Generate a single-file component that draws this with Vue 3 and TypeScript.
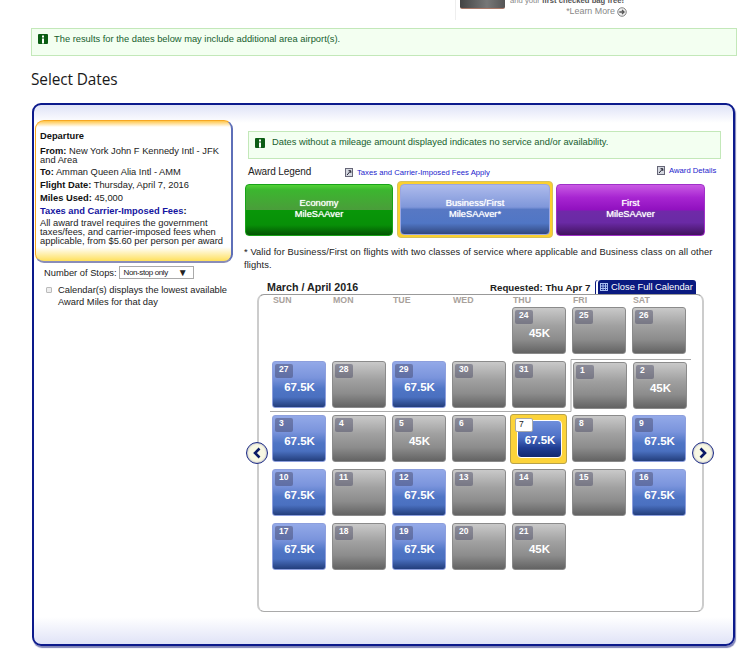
<script setup lang="ts">
type Cell = { day?: number; miles?: string; kind?: 'blue' | 'gray'; sel?: boolean; apr?: boolean }
const weekdays = ['SUN', 'MON', 'TUE', 'WED', 'THU', 'FRI', 'SAT']
const b = (day: number, apr = false): Cell => ({ day, miles: '67.5K', kind: 'blue', apr })
const g = (day: number, miles = '', apr = false): Cell => ({ day, miles, kind: 'gray', apr })
const cells: Cell[] = [
  {}, {}, {}, {}, g(24, '45K'), g(25), g(26),
  b(27), g(28), b(29), g(30), g(31), g(1, '', true), g(2, '45K', true),
  b(3), g(4), g(5, '45K'), g(6), { ...b(7), sel: true }, g(8), b(9),
  b(10), g(11), b(12), g(13), g(14), g(15), b(16),
  b(17), g(18), b(19), g(20), g(21, '45K')
]
const awards = [
  { cls: 'green', a: 'Economy', b: 'MileSAAver' },
  { cls: 'steel', a: 'Business/First', b: 'MileSAAver*' },
  { cls: 'purple', a: 'First', b: 'MileSAAver' }
]
</script>

<template>
  <div class="page">
    <div class="ad">
      <div class="ad-inner">
        <div class="card"></div>
        <div class="ad-text">
          <div class="ad-line">and your <b>first checked bag free!</b></div>
          <div class="learn">*Learn More
            <svg width="10" height="10" viewBox="0 0 11 11"><circle cx="5.5" cy="5.5" r="4.7" fill="#eee" stroke="#777" /><path d="M2.5 5.5h5M5.5 3.2l2.3 2.3-2.3 2.3" fill="none" stroke="#555" stroke-width="1.4" /></svg>
          </div>
        </div>
      </div>
    </div>

    <div class="notice top-notice">
      <svg class="info" width="10" height="10" viewBox="0 0 10 10"><rect width="10" height="10" rx="1" fill="#0b5d14" /><rect x="4" y="1.5" width="2" height="2" fill="#fff" /><rect x="4" y="4.5" width="2" height="5" fill="#fff" /></svg>
      <span>The results for the dates below may include additional area airport(s).</span>
    </div>

    <h1 class="title">Select Dates</h1>

    <div class="panel">
      <aside class="side">
        <div class="summary">
          <div class="s-head">Departure</div>
          <div class="s-line tight"><b>From:</b> New York John F Kennedy Intl - JFK and Area</div>
          <div class="s-line"><b>To:</b> Amman Queen Alia Intl - AMM</div>
          <div class="s-line"><b>Flight Date:</b> Thursday, April 7, 2016</div>
          <div class="s-line"><b>Miles Used:</b> 45,000</div>
          <div class="s-line"><b class="fees">Taxes and Carrier-Imposed Fees</b><b>:</b></div>
          <div class="s-small">All award travel requires the government taxes/fees, and carrier-imposed fees when applicable, from $5.60 per person per award</div>
        </div>
        <div class="stops">
          <span>Number of Stops:</span>
          <div class="select"><span>Non-stop only</span><i>▼</i></div>
        </div>
        <div class="bullet">
          <span class="dot"></span>
          <p>Calendar(s) displays the lowest available Award Miles for that day</p>
        </div>
      </aside>

      <section class="main">
        <div class="notice inner-notice">
          <svg class="info" width="10" height="10" viewBox="0 0 10 10"><rect width="10" height="10" rx="1" fill="#0b5d14" /><rect x="4" y="1.5" width="2" height="2" fill="#fff" /><rect x="4" y="4.5" width="2" height="5" fill="#fff" /></svg>
          <span>Dates without a mileage amount displayed indicates no service and/or availability.</span>
        </div>

        <div class="legend-row">
          <span class="legend">Award Legend</span>
          <a class="ext first-link">
            <svg width="8" height="9" viewBox="0 0 8 9"><rect x=".5" y=".5" width="7" height="8" fill="#d5d8e0" stroke="#667" /><path d="M2 7l3.5-4M3.5 2.7h2.3V5" fill="none" stroke="#223" /></svg>
            Taxes and Carrier-Imposed Fees Apply
          </a>
          <a class="ext second-link">
            <svg width="8" height="9" viewBox="0 0 8 9"><rect x=".5" y=".5" width="7" height="8" fill="#d5d8e0" stroke="#667" /><path d="M2 7l3.5-4M3.5 2.7h2.3V5" fill="none" stroke="#223" /></svg>
            Award Details
          </a>
        </div>

        <div class="awards">
          <div v-for="a in awards" :key="a.cls" class="award-wrap" :class="a.cls">
            <div class="award">
              <div>{{ a.a }}</div>
              <div>{{ a.b }}</div>
            </div>
          </div>
        </div>

        <p class="valid">* Valid for Business/First on flights with two classes of service where applicable and Business class on all other flights.</p>

        <div class="cal-head">
          <span class="month">March / April 2016</span>
          <span class="req">Requested: Thu Apr 7</span>
          <span class="close">
            <svg width="8" height="8" viewBox="0 0 8 8"><path d="M0 .5h8M0 3h8M0 5.5h8M0 7.5h8M.5 0v8M3 0v8M5.5 0v8M7.5 0v8" stroke="#a9bdf0" stroke-width="1" /></svg>
            Close Full Calendar
          </span>
        </div>

        <div class="calendar">
          <button class="nav prev" aria-label="Previous">
            <svg width="10" height="12" viewBox="0 0 10 12"><path d="M7.5 1.5 3 6l4.5 4.5" fill="none" stroke="#0b1a66" stroke-width="2.6" /></svg>
          </button>
          <button class="nav next" aria-label="Next">
            <svg width="10" height="12" viewBox="0 0 10 12"><path d="M2.5 1.5 7 6l-4.5 4.5" fill="none" stroke="#0b1a66" stroke-width="2.6" /></svg>
          </button>
          <div class="weekdays">
            <span v-for="w in weekdays" :key="w">{{ w }}</span>
          </div>
          <div class="grid">
            <svg class="divider" width="424" height="56" viewBox="0 0 424 56"><path d="M0 53.5h301V1.5h120" fill="none" stroke="#aaa" /></svg>
            <template v-for="(c, i) in cells" :key="i">
              <div v-if="c.day === undefined" class="empty"></div>
              <div v-else-if="c.sel" class="sel-wrap">
                <div class="cell blue sel">
                  <span class="day">{{ c.day }}</span>
                  <span class="miles">{{ c.miles }}</span>
                </div>
              </div>
              <div v-else class="cell" :class="[c.kind, { apr: c.apr }]">
                <span class="day">{{ c.day }}</span>
                <span class="miles">{{ c.miles }}</span>
              </div>
            </template>
          </div>
        </div>
      </section>
    </div>
  </div>
</template>

<style>
html, body { margin: 0; background: #fff; }
</style>

<style scoped>
.page {
  width: 750px;
  height: 650px;
  overflow: hidden;
  font-family: "Liberation Sans", Arial, sans-serif;
  color: #222;
  box-sizing: border-box;
}
.ad { height: 20px; overflow: hidden; display: flex; justify-content: flex-start; padding-left: 455px; align-items: flex-end; }
.ad-inner { display: flex; gap: 5px; border-left: 1px solid #eee; padding-left: 4px; height: 20px; }
.card { width: 45px; height: 8px; background: linear-gradient(90deg, #444, #777 60%, #555); border-radius: 0 0 2px 2px; border-bottom: 1px solid #a76; }
.ad-text { width: 117px; color: #888; margin-top: -4px; white-space: nowrap; }
.ad-line { font-size: 7.7px; line-height: 10px; }
.ad-text b { color: #555; }
.learn { font-size: 8.9px; line-height: 11px; display: flex; justify-content: flex-end; align-items: center; gap: 2px; }

.notice {
  box-sizing: border-box;
  background: #f3fff1;
  border: 1px solid #c3e8b9;
  display: flex;
  align-items: flex-start;
  color: #175e2e;
  font-size: 9.33px;
  line-height: 11px;
}
.top-notice { margin: 8px 0 0 31px; width: 706px; height: 28px; padding: 5px 6px 0; gap: 6px; }
.inner-notice { width: 473px; height: 28px; margin-left: 5px; padding: 5px 6px 0; gap: 7px; }
.inner-notice .info { margin-top: 1px; }
.info { flex: none; }

.title {
  margin: 13px 0 0 31px;
  font-family: "Open Sans", sans-serif;
  font-weight: 400;
  font-size: 15.4px;
  line-height: 22px;
  color: #1a1a1a;
  letter-spacing: -.1px;
}

.panel {
  box-sizing: border-box;
  margin: 12px 0 0 32px;
  width: 703px;
  height: 543px;
  border: 2px solid #0c1a8c;
  border-radius: 9px;
  box-shadow: 1px 2px 1px #7f83b8;
  background: linear-gradient(#dfe3f7, #fff 18px, #fff 512px, #e0e3f7 539px);
  display: flex;
  align-items: flex-start;
}

.side { width: 209px; flex: none; padding: 15px 0 0 1px; box-sizing: border-box; }
.summary {
  box-sizing: border-box;
  width: 198px;
  height: 143px;
  border-radius: 9px;
  border: 1px solid #f6a723;
  border-right: 2px solid #5e6fb8;
  border-bottom: 2px solid #8a8db8;
  background: linear-gradient(#ffc64a, #fff 6px, #fff 126px, #ffe05c);
  padding: 10px 4px 0 4px;
  font-size: 9.33px;
  color: #222;
}
.s-head { font-weight: 700; font-size: 9.33px; margin-bottom: 5px; line-height: 11px; color: #111; }
.s-line { margin-bottom: 4px; line-height: 9px; }
.s-line.tight { margin-bottom: 3px; }
.s-line b { color: #111; }
.s-line b.fees { color: #1414a0; }
.s-small { line-height: 9px; margin-top: -1px; }

.stops { display: flex; align-items: center; gap: 2px; margin: 3px 0 0 9px; font-size: 9.33px; }
.select {
  box-sizing: border-box;
  width: 75px;
  height: 13px;
  border: 1px solid #aaa;
  font-size: 8px;
  letter-spacing: -.4px;
  padding: 0 5px 0 4px;
  display: flex;
  justify-content: space-between;
  align-items: center;
  color: #222;
}
.select i { font-style: normal; font-size: 10px; letter-spacing: 0; }
.bullet { display: flex; margin: 5px 0 0 11px; gap: 6px; font-size: 9.33px; }
.bullet p { margin: 0; line-height: 12px; width: 176px; }
.dot { width: 4px; height: 4px; border: 1px solid #bbb; background: #eee; border-radius: 1px; margin-top: 3px; flex: none; }

.main { flex: 1; padding-top: 26px; min-width: 0; }
.legend-row { position: relative; height: 22px; font-size: 10px; margin-left: -1px; }
.legend { position: absolute; left: 6px; top: 7px; letter-spacing: -.1px; font-size: 10px; color: #222; }
.ext { position: absolute; color: #2323cc; font-size: 7.7px; display: flex; align-items: center; gap: 4px; white-space: nowrap; }
.first-link { left: 103px; top: 9px; }
.second-link { left: 415px; top: 7px; }

.awards { display: flex; align-items: center; margin-left: 2px; width: 462px; height: 57px; }
.award-wrap { box-sizing: border-box; }
.green .award { width: 148px; height: 52px; border: 1px solid #19a319; background: linear-gradient(#51d236, #3cb62f 10%, #4a9d3a 50%, #089708 50%, #088f08 80%, #035503); }
.steel { padding: 2px; border: 1px solid #d8c25a; border-radius: 4px; margin: 0 3px 0 4px; height: 57px; background: #fbd02f; }
.steel .award { width: 150px; height: 51px; border: 1px solid #9ba6e0; background: linear-gradient(#aebbec, #7f97da 45%, #5778c4 50%, #5076c5 78%, #32487f); }
.purple .award { width: 149px; height: 52px; border: 1px solid #a030c8; background: linear-gradient(#c95ae4, #a725d1 25%, #9010bf 50%, #6f2aa8 52%, #6a2aa5 75%, #42125f); }
.award {
  box-sizing: border-box;
  border-radius: 4px;
  color: #fff;
  font-size: 9.33px;
  text-align: center;
  line-height: 11px;
  padding-top: 13px;
  text-shadow: 0 0 1px #fff;
}
.valid { margin: 8px 0 0 1px; font-size: 9.33px; line-height: 13px; letter-spacing: .1px; width: 476px; color: #222; }
.cal-head { display: flex; align-items: flex-end; height: 15px; margin: 7px 0 0 0; width: 460px; padding-left: 24px; }
.month { font-weight: 700; color: #222; font-size: 10.7px; width: 223px; line-height: 13px; }
.req { font-weight: 700; font-size: 9.7px; width: 108px; line-height: 13px; }
.close {
  background: #0a1a80;
  color: #fff;
  height: 14px;
  width: 98px;
  box-sizing: border-box;
  border-radius: 3px 3px 0 0;
  box-shadow: -2px 0 0 #fff, -3px 0 0 #0a1a80;
  display: flex;
  align-items: center;
  gap: 3px;
  padding-left: 2px;
  font-size: 9.33px;
  white-space: nowrap;
}

.calendar {
  position: relative;
  box-sizing: border-box;
  width: 447px;
  height: 318px;
  margin-left: 14px;
  border: 1px solid #ccc;
  border-left-width: 2px;
  border-right-width: 2px;
  border-radius: 7px;
  border-top-color: #999;
  border-bottom-color: #aaa;
  padding: 0 0 0 13px;
}
.nav {
  position: absolute;
  top: 147px;
  width: 22px;
  height: 22px;
  padding: 0;
  border: 1px solid #1b2a86;
  border-radius: 50%;
  background: #f8f8e4;
  box-shadow: inset 0 0 2px #88a;
  display: flex;
  align-items: center;
  justify-content: center;
}
.prev { left: -13px; }
.next { right: -12px; }
.weekdays { display: grid; grid-template-columns: repeat(7, 54px); column-gap: 6px; height: 12px; font-size: 8.8px; font-weight: 700; color: #a9a29c; line-height: 10px; padding-left: 1px; }
.grid { position: relative; display: grid; grid-template-columns: repeat(7, 54px); grid-auto-rows: 47px; gap: 7px 6px; }
.divider { position: absolute; left: -2px; top: 51px; pointer-events: none; }
.empty { height: 47px; }
.cell {
  position: relative;
  box-sizing: border-box;
  width: 54px;
  height: 47px;
  border-radius: 3px;
  color: #fff;
  text-align: center;
}
.cell.gray { border: 1px solid #8b8b8b; background: linear-gradient(#c9c9c9, #a0a0a0 40%, #8c8c8c 70%, #636363); }
.cell.blue { border: 1px solid #8d9fdd; background: linear-gradient(#93a9e8, #7a94dc 35%, #4f75c5 60%, #4a70c0 78%, #233e7c); }
.cell.apr { margin: 1px -1px -1px 1px; }
.day {
  position: absolute;
  left: 2px;
  top: 2px;
  width: 18px;
  height: 14px;
  border-radius: 2px;
  background: rgba(60, 60, 90, .42);
  color: #fff;
  font-size: 8.5px;
  font-weight: 700;
  line-height: 11px;
  text-align: left;
  padding-left: 4px;
  box-sizing: border-box;
}
.miles {
  display: block;
  padding: 18px 0 0 1px;
  font-size: 11.5px;
  font-weight: 700;
  line-height: 14px;
}
.sel-wrap {
  box-sizing: border-box;
  width: 57px;
  height: 50px;
  margin: -1px -1px 0 -2px;
  background: #fcd33a;
  border: 1px solid #b8a24a;
  border-radius: 3px;
  padding: 5px 5px 5px 6px;
  position: relative;
}
.cell.sel { width: 45px; height: 38px; border: 1px solid #fff; background: linear-gradient(#6f8fdc, #4d70c6 45%, #1f3d92 75%, #12296f); border-radius: 4px; }
.cell.sel .day { background: #fff; color: #222; left: -3px; top: -3px; width: 18px; height: 14px; border: 1px solid #aaa; line-height: 10px; padding-left: 3px; font-weight: 400; }
.cell.sel .miles { padding-top: 12px; }
</style>
